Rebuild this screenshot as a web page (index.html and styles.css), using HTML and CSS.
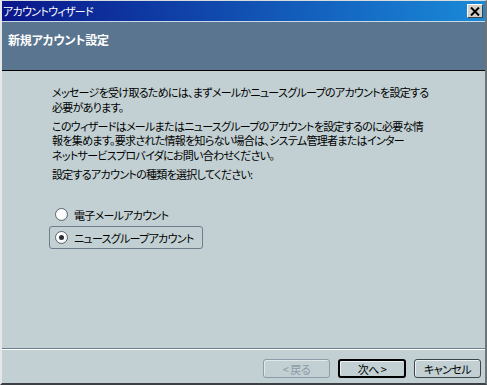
FILE: index.html
```html
<!DOCTYPE html>
<html lang="ja">
<head>
    <meta charset="UTF-8">
    <title>アカウントウィザード</title>
    <link rel="stylesheet" href="styles.css">
</head>
<body>
    <div class="window">
        <div class="titlebar">
            <span class="title">アカウントウィザード</span>
            <span class="close-btn">
                <svg width="10" height="9" viewBox="0 0 10 9">
                    <path d="M1 0.5 L9 8.5 M9 0.5 L1 8.5" stroke="#000" stroke-width="2"/>
                </svg>
            </span>
        </div>

        <div class="header">
            <h1>新規アカウント設定</h1>
        </div>

        <div class="content">
            <p>メッセージを受け取るためには、まずメールかニュースグループのアカウントを設定する<br>必要があります。</p>
            <p>このウィザードはメールまたはニュースグループのアカウントを設定するのに必要な情<br>報を集めます。要求された情報を知らない場合は、システム管理者またはインター<br>ネットサービスプロバイダにお問い合わせください。</p>
            <p>設定するアカウントの種類を選択してください:</p>

            <div class="radio-group">
                <div class="radio-row">
                    <span class="radio"></span>
                    <span>電子メールアカウント</span>
                </div>
                <div class="radio-row focused">
                    <span class="radio checked"></span>
                    <span>ニュースグループアカウント</span>
                </div>
            </div>
        </div>

        <div class="footer">
            <button class="btn" disabled>&lt; 戻る</button>
            <button class="btn default">次へ &gt;</button>
            <button class="btn">キャンセル</button>
        </div>
    </div>
</body>
</html>
```

FILE: styles.css
```css
body {
    margin: 0;
    font-family: "Noto Sans CJK JP", "Noto Sans", sans-serif;
    font-size: 11px;
    letter-spacing: -0.7px;
    font-feature-settings: "palt";
}
.window {
    width: 487px;
    height: 385px;
    box-sizing: border-box;
    display: flex;
    flex-direction: column;
    background: #c2d0d3;
    border-style: solid;
    border-width: 1px 2px 2px 2px;
    border-color: #d8dcdc #6c747a #3c4044 #e4e8e8;
}
.titlebar {
    height: 20px;
    flex-shrink: 0;
    display: flex;
    align-items: center;
    justify-content: space-between;
    padding: 0 2px 0 1px;
    background: linear-gradient(to right, #0a168a, #1256b6 55%, #1a8ad8);
}
.title {
    color: #fff;
    line-height: 20px;
}
.close-btn {
    width: 16px;
    height: 14px;
    box-sizing: border-box;
    display: flex;
    align-items: center;
    justify-content: center;
    background: #d4d0c8;
    border-style: solid;
    border-width: 1px;
    border-color: #fff #404040 #404040 #fff;
}
.header {
    height: 50px;
    flex-shrink: 0;
    box-sizing: border-box;
    background: #5a7590;
    border-top: 1px solid #c8d8e4;
    border-bottom: 1px solid #000;
    padding: 10px 0 0 6px;
}
.header h1 {
    margin: 0;
    font-size: 12px;
    letter-spacing: -0.2px;
    font-weight: bold;
    color: #fff;
    line-height: 16px;
}
.content {
    flex: 1;
    padding: 14px 0 0 50px;
}
.content p {
    margin: 0 0 4.5px 0;
    line-height: 14.5px;
    white-space: nowrap;
}
.radio-group {
    margin-top: 22px;
    display: flex;
    flex-direction: column;
    align-items: flex-start;
    margin-left: -3px;
}
.radio-row {
    height: 23px;
    box-sizing: border-box;
    display: flex;
    align-items: center;
    gap: 6px;
    padding: 0 8px 0 5px;
    border: 1px solid transparent;
    white-space: nowrap;
}
.radio-row.focused {
    border-color: #6d7e8c;
    border-radius: 3px;
}
.radio {
    width: 13px;
    height: 13px;
    flex-shrink: 0;
    box-sizing: border-box;
    border-radius: 50%;
    border: 1px solid #5c6670;
    background: radial-gradient(circle at 40% 40%, #fff 45%, #d8dde0);
    display: flex;
    align-items: center;
    justify-content: center;
}
.radio.checked::after {
    content: "";
    width: 5px;
    height: 5px;
    border-radius: 50%;
    background: #2a3036;
}
.footer {
    flex-shrink: 0;
    display: flex;
    justify-content: flex-end;
    align-items: center;
    gap: 8px;
    padding: 10px 4px 5px 0;
    border-top: 1px solid #6c7f8e;
    box-shadow: inset 0 1px 0 #fff;
}
.btn {
    width: 67px;
    height: 19px;
    box-sizing: border-box;
    padding: 0;
    font-family: inherit;
    font-size: 11px;
    letter-spacing: -0.5px;
    font-feature-settings: "palt";
    color: #000;
    background: #c2d0d3;
    border: 1px solid #3c444c;
    border-radius: 3px;
    box-shadow: inset 1px 1px 0 #eef2f4;
}
.btn:disabled {
    color: #8c9aa4;
    border-color: #8c9ca8;
    box-shadow: inset 1px 1px 0 #e0e8ea;
}
.btn.default {
    width: 68px;
    border: 2px solid #000;
}
```
